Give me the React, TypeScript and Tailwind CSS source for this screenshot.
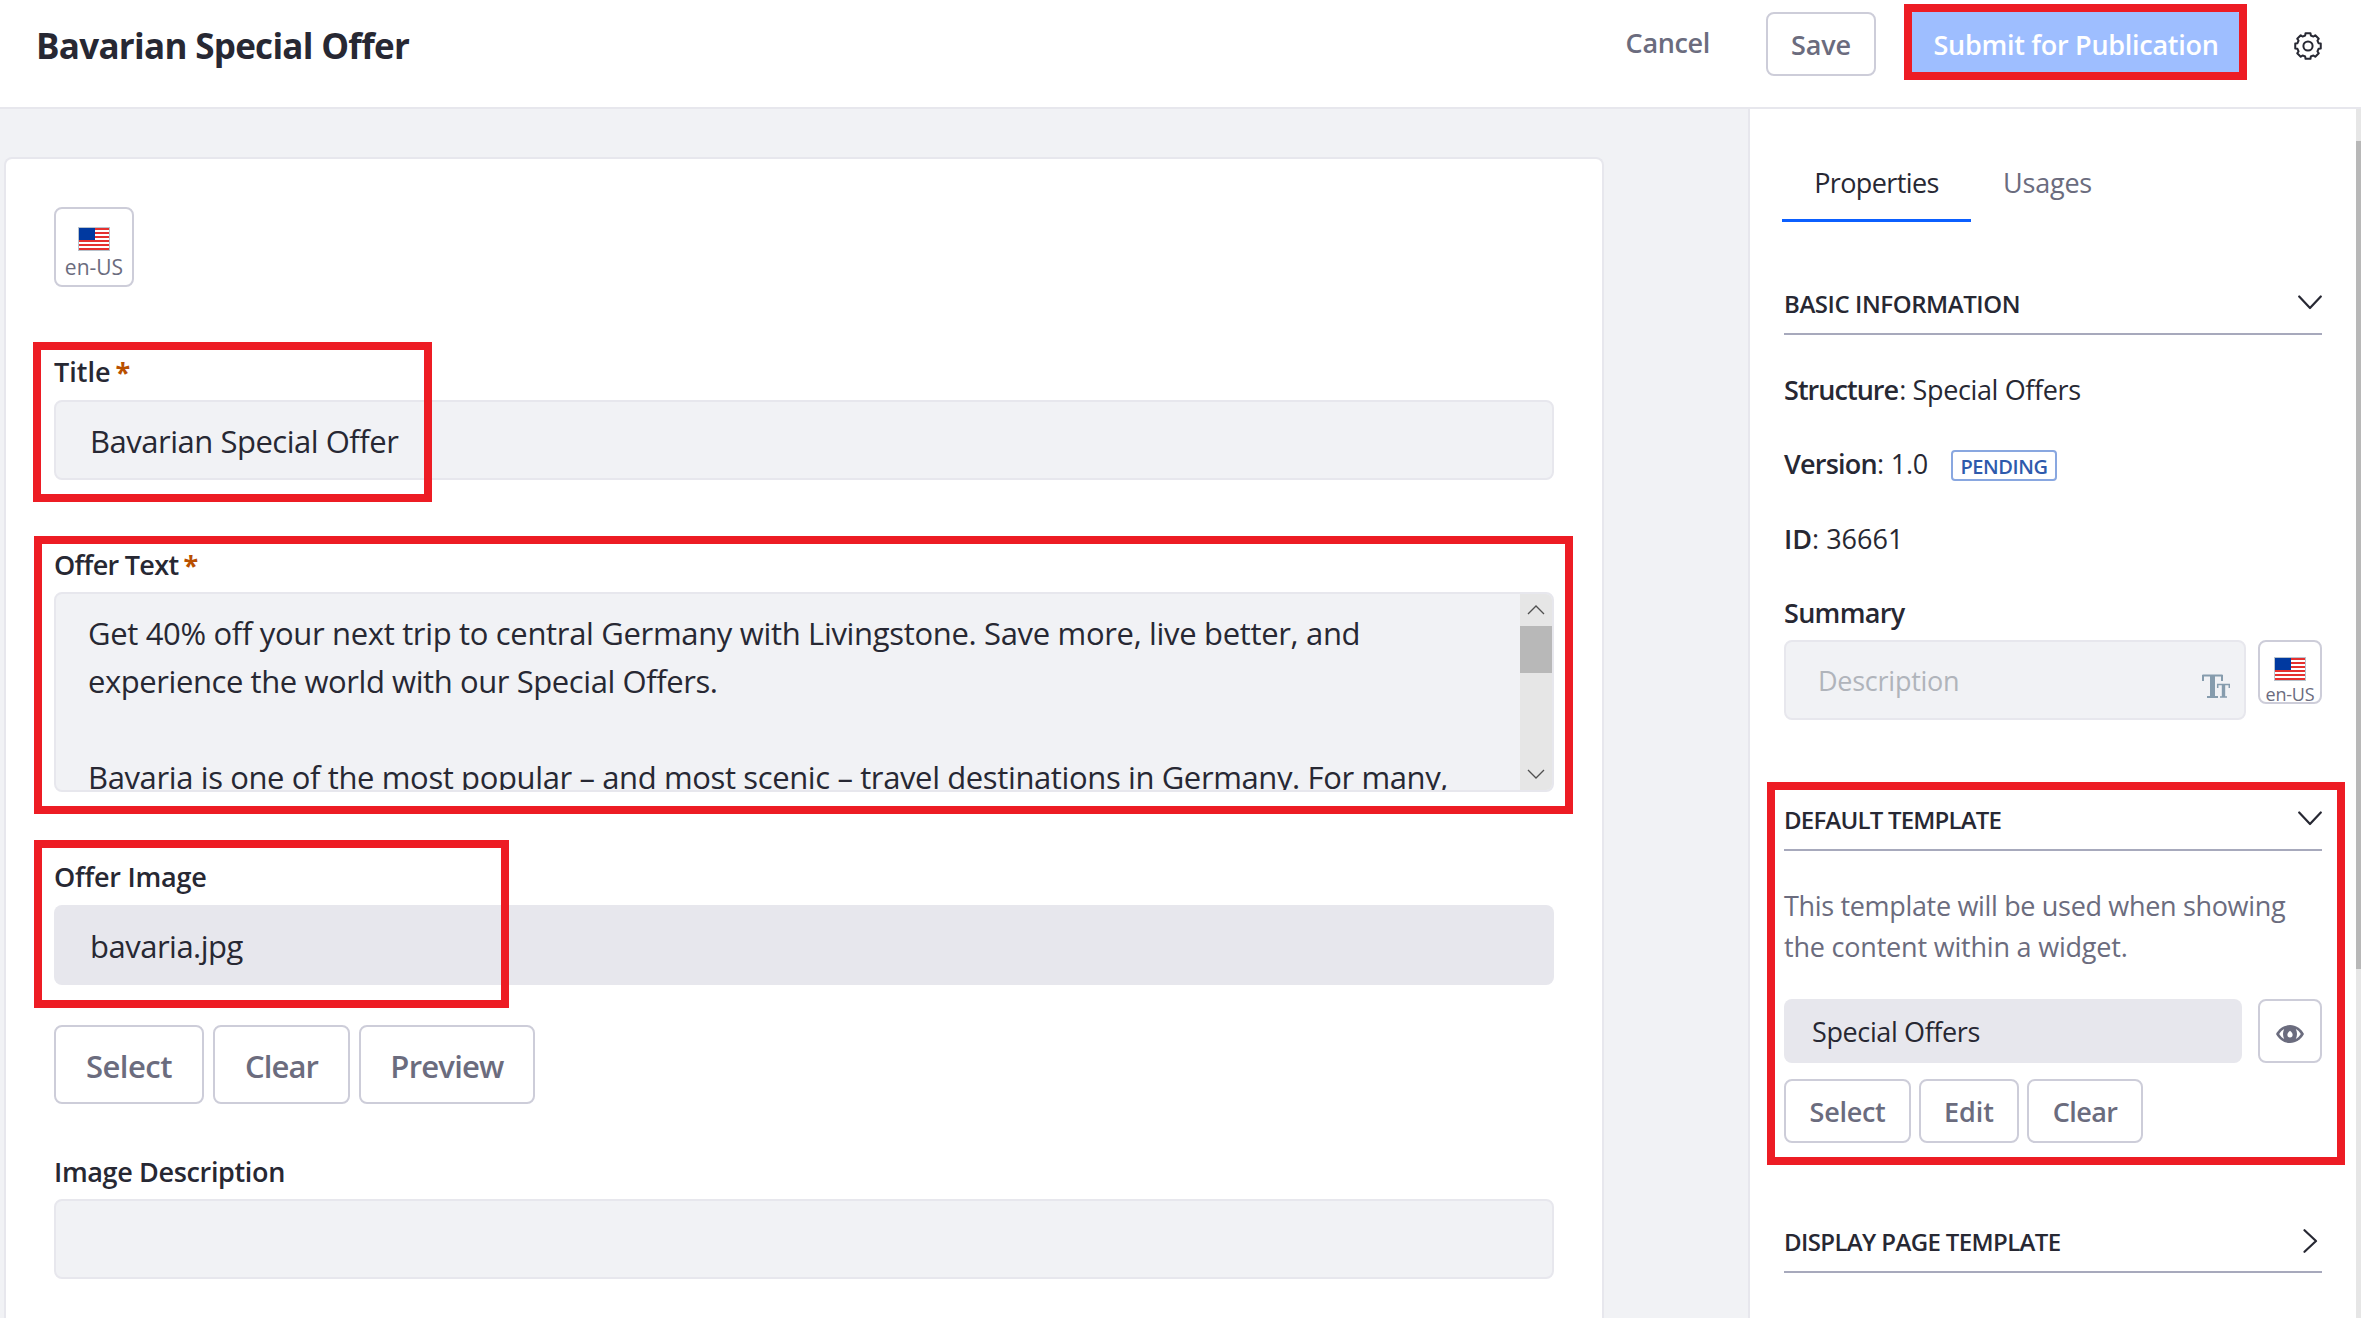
import React from "react";

type Kids = { children?: React.ReactNode; className?: string };

function Highlight({ className = "" }: { className?: string }) {
  return <div className={`pointer-events-none absolute z-10 border-8 border-[#ed1c24] ${className}`} />;
}

function Flag() {
  return (
    <svg width="32" height="24" viewBox="0 0 32 24" className="block shrink-0" shapeRendering="crispEdges">
      <rect width="32" height="24" fill="#b9c3cd" />
      <rect x="1" y="1" width="30" height="22" fill="#fff" />
      {[1, 5, 9, 13, 17, 21].map((y) => (
        <rect key={y} x="1" y={y} width="30" height="2" fill="#e5302f" />
      ))}
      <rect x="1" y="1" width="16" height="12" fill="#0039a0" />
    </svg>
  );
}

function Gear() {
  const pts: string[] = [];
  for (let i = 0; i < 8; i++) {
    for (const [off, r] of [[-15, 10.9], [-11, 13], [11, 13], [15, 10.9]]) {
      const a = ((i * 45 + off - 90) * Math.PI) / 180;
      pts.push(`${(14 + r * Math.cos(a)).toFixed(2)},${(14 + r * Math.sin(a)).toFixed(2)}`);
    }
  }
  return (
    <svg width="28" height="28" viewBox="0 0 28 28" fill="none" stroke="#272833" strokeWidth="2" strokeLinejoin="round">
      <polygon points={pts.join(" ")} />
      <circle cx="14" cy="14" r="4.6" />
    </svg>
  );
}

function Eye() {
  return (
    <svg width="28" height="18" viewBox="0 0 28 18">
      <path d="M0 9C3 3.500 8 0 14 0s11 3.500 14 9c-3 5.500-8 9-14 9S3 14.500 0 9Z" fill="#6b6c7e" />
      <path d="M3.200 9c1.300-2.200 3-3.900 5-5-1.600 3-1.600 7 0 10-2-1.100-3.700-2.800-5-5ZM24.800 9c-1.300-2.200-3-3.900-5-5 1.600 3 1.600 7 0 10 2-1.100 3.700-2.800 5-5Z" fill="#fff" />
      <path d="M14 5.800c1.700 1.400 2.600 2.600 2.600 4a2.600 2.600 0 0 1-5.200 0c0-1.400.9-2.600 2.600-4Z" fill="#fff" />
    </svg>
  );
}

function TextSize() {
  return (
    <svg width="28" height="24" viewBox="0 0 28 24" fill="none" stroke="#869cad">
      <path d="M.5 1.500h20M1 1v6M20 1v6M5 23h11" strokeWidth="2" />
      <path d="M10.500 1v22" strokeWidth="5" />
      <path d="M15 10.500h13M15.700 10v4M27.300 10v4M18 23h7" strokeWidth="1.500" />
      <path d="M21.500 10v13" strokeWidth="3.400" />
    </svg>
  );
}

function ChevronDown() {
  return (
    <svg width="24" height="15" viewBox="0 0 24 15" fill="none" stroke="#272833" strokeWidth="2.200" strokeLinecap="round" strokeLinejoin="round">
      <path d="M1.200 1.500 12 13 22.800 1.500" />
    </svg>
  );
}

function ChevronRight() {
  return (
    <svg width="15" height="24" viewBox="0 0 15 24" fill="none" stroke="#272833" strokeWidth="2.200" strokeLinecap="round" strokeLinejoin="round">
      <path d="M1.500 1.200 13 12 1.500 22.800" />
    </svg>
  );
}

function Label({ children, className = "", required }: Kids & { required?: boolean }) {
  return (
    <div className={`flex h-9 text-[27px] leading-9 font-semibold ${className}`}>
      <span>{children}</span>
      {required && <span className="ml-[5px] font-bold text-[#b95000]">*</span>}
    </div>
  );
}

function Button({ children, className = "" }: Kids) {
  return (
    <button className={`flex shrink-0 items-center justify-center rounded-lg border-2 border-[#cdcdd9] bg-white pt-[3px] font-semibold whitespace-nowrap text-[#6b6c7e] ${className}`}>
      {children}
    </button>
  );
}

function SectionTitle({ children, className = "", icon }: Kids & { icon: React.ReactNode }) {
  return (
    <div className="flex justify-between border-b-2 border-[#a7a9bc] pb-[11px]">
      <h2 className={`text-[24px] leading-9 font-semibold ${className}`}>{children}</h2>
      {icon}
    </div>
  );
}

function Header() {
  return (
    <header className="flex h-[109px] shrink-0 items-start border-b-2 border-[#e7e7ed] bg-white pl-9">
      <h1 className="mt-[22px] text-[35px] leading-[48px] font-bold tracking-[-0.71px]">Bavarian Special Offer</h1>
      <div className="ml-auto flex items-start">
        <span className="mt-[23px] mr-[56px] text-[27px] leading-10 font-semibold tracking-[-0.34px] text-[#6b6c7e]">Cancel</span>
        <Button className="mt-3 h-16 w-[110px] text-[27px] tracking-[-0.1px]">Save</Button>
        <div className="relative mt-3 ml-[30px]">
          <button className="flex h-16 w-[339px] items-center justify-center rounded-lg bg-[#9ebeff] pt-[3px] pl-px text-[27px] font-semibold tracking-[-0.28px] whitespace-nowrap text-white">
            Submit for Publication
          </button>
          <Highlight className="-top-2 -left-0.5 h-[76px] w-[343px]" />
        </div>
        <div className="mt-8 mr-[39px] ml-[49px]">
          <Gear />
        </div>
      </div>
    </header>
  );
}

function TextArea() {
  return (
    <div className="mt-[9px] flex h-[200px] overflow-hidden rounded-lg border-2 border-[#e7e7ed] bg-[#f1f2f5]">
      <div className="flex-1 pt-[15px] pl-8 text-[31px] leading-[48px] whitespace-nowrap">
        <p className="tracking-[-0.33px]">Get 40% off your next trip to central Germany with Livingstone. Save more, live better, and</p>
        <p className="tracking-[-0.42px]">experience the world with our Special Offers.</p>
        <p className="mt-12 tracking-[-0.38px]">Bavaria is one of the most popular – and most scenic – travel destinations in Germany. For many,</p>
      </div>
      <div className="flex w-8 flex-col items-center bg-[#e6e6e6]">
        <div className="flex h-8 items-center">
          <svg width="18" height="10" viewBox="0 0 18 10" fill="none" stroke="#505050" strokeWidth="1.300"><path d="M1 9 9 1l8 8" /></svg>
        </div>
        <div className="h-[47px] w-full bg-[#b8b8b8]" />
        <div className="mt-auto flex h-8 items-center">
          <svg width="18" height="10" viewBox="0 0 18 10" fill="none" stroke="#505050" strokeWidth="1.300"><path d="m1 1 8 8 8-8" /></svg>
        </div>
      </div>
    </div>
  );
}

function ContentForm() {
  return (
    <main className="mt-12 ml-1 w-[1600px] shrink-0 rounded-t-lg border-2 border-b-0 border-[#e7e7ed] bg-white p-12">
      <button className="flex h-20 w-20 flex-col items-center rounded-lg border-2 border-[#cdcdd9] pt-[18px] text-[21px] leading-7 text-[#6b6c7e]">
        <Flag />
        <span className="mt-0.5">en-US</span>
      </button>

      <section className="relative mt-[67px]">
        <Label required>Title</Label>
        <div className="mt-2.5 flex h-20 items-center rounded-lg border-2 border-[#e7e7ed] bg-[#f1f2f5] pt-0.5 pl-[34px] text-[31px] tracking-[-0.48px]">
          Bavarian Special Offer
        </div>
        <Highlight className="-top-3 -left-[21px] h-40 w-[399px]" />
      </section>

      <section className="relative mt-[67px]">
        <Label className="tracking-[-0.7px]" required>Offer Text</Label>
        <TextArea />
        <Highlight className="-top-[11px] -left-5 h-[278px] w-[1539px]" />
      </section>

      <section className="relative mt-[67px]">
        <Label className="tracking-[-0.25px]">Offer Image</Label>
        <div className="mt-2.5 flex h-20 items-center rounded-lg bg-[#e7e7ed] pt-0.5 pl-9 text-[31px] tracking-[-0.5px]">bavaria.jpg</div>
        <div className="mt-10 flex">
          <Button className="h-[79px] w-[150px] text-[31px] tracking-[-0.5px]">Select</Button>
          <Button className="ml-[9px] h-[79px] w-[137px] text-[31px] tracking-[-0.9px]">Clear</Button>
          <Button className="ml-[9px] h-[79px] w-[176px] text-[31px] tracking-[-0.77px]">Preview</Button>
        </div>
        <Highlight className="-top-[19px] -left-5 h-[168px] w-[475px]" />
      </section>

      <section className="mt-[50px]">
        <Label className="tracking-[-0.35px]">Image Description</Label>
        <div className="mt-[9px] h-20 rounded-lg border-2 border-[#e7e7ed] bg-[#f1f2f5]" />
      </section>
    </main>
  );
}

function Sidebar() {
  return (
    <aside className="ml-auto flex w-[613px] shrink-0 border-l-2 border-[#e7e7ed] bg-white">
      <div className="ml-[34px] w-[538px]">
        <nav className="mt-14 -ml-0.5 flex text-[27px] leading-9">
          <span className="flex w-[189px] justify-center border-b-[3px] border-[#0b5fff] pb-[18px] tracking-[-0.6px]">Properties</span>
          <span className="ml-8 tracking-[-0.2px] text-[#6b6c7e]">Usages</span>
        </nav>

        <section className="mt-16">
          <SectionTitle className="tracking-[-0.43px]" icon={<span className="mt-[9px]"><ChevronDown /></span>}>BASIC INFORMATION</SectionTitle>
          <div className="mt-[34px] flex text-[27px] leading-[42px]">
            <b className="font-semibold tracking-[-0.96px]">Structure</b>
            <span className="ml-px tracking-[-0.36px]">: Special Offers</span>
          </div>
          <div className="mt-8 flex items-start text-[27px] leading-[42px]">
            <b className="font-semibold tracking-[-0.77px]">Version</b>
            <span className="tracking-[-0.2px]">: 1.0</span>
            <span className="mt-[7px] ml-[23px] flex h-[31px] w-[106px] items-center justify-center rounded border-2 border-[#89a7e0] pt-0.5 text-[20px] leading-6 font-semibold tracking-[-0.4px] text-[#2e5aac]">PENDING</span>
          </div>
          <div className="mt-[33px] flex text-[27px] leading-[42px]">
            <b className="font-semibold">ID</b>
            <span>: 36661</span>
          </div>
          <div className="mt-8 text-[27px] leading-[42px] font-semibold tracking-[-0.7px]">Summary</div>
          <div className="mt-1.5 flex justify-between">
            <div className="flex h-20 w-[462px] items-center justify-between rounded-lg border-2 border-[#e7e7ed] bg-[#f1f2f5] pt-0.5 pr-3.5 pl-8 text-[27px] tracking-[-0.25px] text-[#b0b4bb]">
              Description
              <span className="mt-2.5"><TextSize /></span>
            </div>
            <button className="flex h-16 w-16 flex-col items-center overflow-hidden rounded-lg border-2 border-[#cdcdd9] pt-[15px] text-[18px] leading-6 tracking-[-0.2px] text-[#6b6c7e]">
              <Flag />
              <span className="mt-px">en-US</span>
            </button>
          </div>
        </section>

        <section className="relative mt-[82px]">
          <SectionTitle className="tracking-[-0.8px]" icon={<span className="mt-[9px]"><ChevronDown /></span>}>DEFAULT TEMPLATE</SectionTitle>
          <p className="mt-[34px] text-[27px] leading-[41px] tracking-[-0.33px] whitespace-nowrap text-[#6b6c7e]">
            This template will be used when showing
            <br />
            <span className="tracking-[-0.2px]">the content within a widget.</span>
          </p>
          <div className="mt-8 flex justify-between">
            <div className="flex h-16 w-[458px] items-center rounded-lg bg-[#e7e7ed] pt-0.5 pl-7 text-[27px] tracking-[-0.38px]">Special Offers</div>
            <Button className="h-16 w-16 pt-[5px]"><Eye /></Button>
          </div>
          <div className="mt-4 flex text-[27px]">
            <Button className="h-16 w-[127px] tracking-[-0.3px]">Select</Button>
            <Button className="ml-2 h-16 w-[100px]">Edit</Button>
            <Button className="ml-2 h-16 w-[116px] tracking-[-0.6px]">Clear</Button>
          </div>
          <Highlight className="-top-5 -left-[17px] h-[383px] w-[578px]" />
        </section>

        <section className="mt-[81px]">
          <SectionTitle className="tracking-[-0.62px]" icon={<span className="mt-[5px] mr-1"><ChevronRight /></span>}>DISPLAY PAGE TEMPLATE</SectionTitle>
        </section>
      </div>
      <div className="ml-auto w-[5px] bg-[#e6e6e6] pt-8">
        <div className="h-[828px] bg-[#b8b8b8]" />
      </div>
    </aside>
  );
}

export default function App() {
  return (
    <div className="flex h-[1318px] w-[2361px] flex-col overflow-hidden bg-[#f1f2f5] font-['Open_Sans',sans-serif] text-[#272833]">
      <Header />
      <div className="flex min-h-0 flex-1">
        <ContentForm />
        <Sidebar />
      </div>
    </div>
  );
}
